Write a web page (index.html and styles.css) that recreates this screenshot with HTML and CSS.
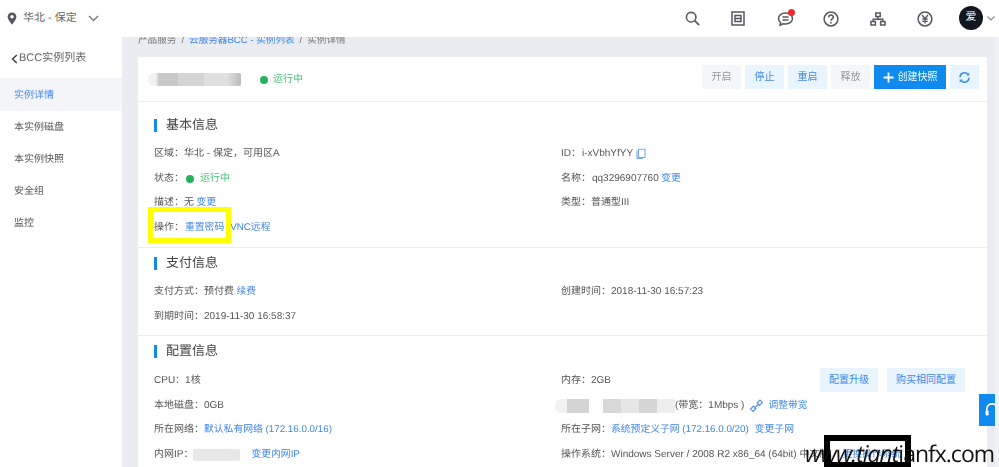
FILE: index.html
```html
<!DOCTYPE html>
<html lang="zh">
<head>
<meta charset="utf-8">
<title>实例详情</title>
<link rel="stylesheet" href="styles.css">
</head>
<body>
<div class="app">
  <header class="topbar">
    <div class="region">
      <svg class="pin" width="10" height="13" viewBox="0 0 12 16"><path d="M6 0.5C2.8 0.5 0.6 2.9 0.6 5.800 0.6 9.400 6 15.500 6 15.500S11.400 9.400 11.400 5.800C11.400 2.900 9.200 0.500 6 0.500Z" fill="#55595f"/><circle cx="6" cy="5.800" r="2.100" fill="#fff"/></svg>
      <span>华北 - 保定</span>
      <svg class="chev" width="11" height="7" viewBox="0 0 11 7"><path d="M1 1l4.500 4.500L10 1" fill="none" stroke="#777" stroke-width="1.300"/></svg>
    </div>
    <div class="tools">
      <svg class="tool t-search" width="15" height="15" viewBox="0 0 17 17"><circle cx="7" cy="7" r="5.400" fill="none" stroke="#55595f" stroke-width="1.800"/><path d="M11 11l5 5" stroke="#55595f" stroke-width="2"/></svg>
      <svg class="tool t-doc" width="14" height="15" viewBox="0 0 14 15"><path d="M1 1h12v13H1zM4 4.500h6v6H4zM4 7.500h6" fill="none" stroke="#55595f" stroke-width="1.500"/></svg>
      <div class="msg">
        <svg width="17" height="16" viewBox="0 0 17 16"><path d="M8.500 2C4.500 2 1.500 4.400 1.500 7.500c0 1.600.8 3 2.100 4l-.6 2.800 3.200-1.500c.7.200 1.500.2 2.300.2 4 0 7-2.400 7-5.500S12.500 2 8.500 2zM5.500 6h6M5.500 9h6" fill="none" stroke="#55595f" stroke-width="1.500"/></svg>
        <span class="dot"></span>
      </div>
      <svg class="tool t-help" width="16" height="16" viewBox="0 0 16 16"><circle cx="8" cy="8" r="6.900" fill="none" stroke="#55595f" stroke-width="1.500"/><path d="M5.800 6.300c0-3 4.500-3 4.500-.1 0 1.700-2.300 1.700-2.300 3.500" fill="none" stroke="#55595f" stroke-width="1.500"/><circle cx="8" cy="11.700" r=".9" fill="#55595f"/></svg>
      <svg class="tool t-org" width="16" height="14" viewBox="0 0 16 14"><path d="M5.800 1h4.400v3.600H5.800zM1 9.400h4.400V13H1zM10.600 9.400H15V13h-4.400zM8 4.600v2.600M3.200 9.400V7.200h9.600v2.200" fill="none" stroke="#55595f" stroke-width="1.500"/></svg>
      <svg class="tool t-yuan" width="16" height="16" viewBox="0 0 16 16"><circle cx="8" cy="8" r="6.900" fill="none" stroke="#55595f" stroke-width="1.500"/><path d="M5 4l3 3.500L11 4M8 7.500V12.500M5.300 8h5.400M5.300 10.300h5.400" fill="none" stroke="#55595f" stroke-width="1.300"/></svg>
      <div class="user">
        <span class="avatar">爱</span>
        <svg width="8" height="5" viewBox="0 0 8 5"><path d="M.5.500L4 4 7.500.5" fill="none" stroke="#8a8e94" stroke-width="1.100"/></svg>
      </div>
    </div>
  </header>
  <div class="body">
    <aside class="sidebar">
      <div class="back"><svg width="7" height="10" viewBox="0 0 7 10"><path d="M5.800 1L1.600 5l4.200 4" fill="none" stroke="#444" stroke-width="1.600"/></svg>BCC实例列表</div>
      <nav class="menu">
        <a class="menu-item active">实例详情</a>
        <a class="menu-item">本实例磁盘</a>
        <a class="menu-item">本实例快照</a>
        <a class="menu-item">安全组</a>
        <a class="menu-item">监控</a>
      </nav>
    </aside>
    <main class="main">
      <div class="crumbs">产品服务<span class="sep">/</span><a>云服务器BCC - 实例列表</a><span class="sep">/</span>实例详情</div>
      <section class="card">
        <div class="card-head">
          <div class="inst">
            <span class="name-mask"></span>
            <span class="state-dot"></span><span class="green">运行中</span>
          </div>
          <div class="actions">
            <button class="btn off">开启</button>
            <button class="btn soft">停止</button>
            <button class="btn soft">重启</button>
            <button class="btn off">释放</button>
            <button class="btn solid"><svg width="11" height="11" viewBox="0 0 11 11"><path d="M5.500 .5v10M.5 5.500h10" stroke="#fff" stroke-width="1.800"/></svg>创建快照</button>
            <button class="btn soft icon"><svg width="11" height="11" viewBox="0 0 11 11"><path d="M1 5.200a4.500 4.500 0 0 1 8-2.700M10 5.800a4.500 4.500 0 0 1-8 2.700" fill="none" stroke="#2f8fee" stroke-width="1.500"/><path d="M10.300 .6v3H7.300zM.7 10.400v-3h3z" fill="#2f8fee"/></svg></button>
          </div>
        </div>

        <div class="block first">
          <h2 class="title">基本信息</h2>
          <div class="rows">
            <div>区域：华北 - 保定，可用区A</div>
            <div>ID：<span class="v">i-xVbhYfYY</span><svg class="copy" width="10" height="11" viewBox="0 0 10 11"><path d="M2.500 1.200H9v8.300H2.500zM1 2.500v8h6" fill="none" stroke="#7ea6ee" stroke-width="1.100"/></svg></div>
            <div>状态：<span class="state-dot gap"></span><span class="green">运行中</span></div>
            <div>名称：<span class="v">qq3296907760</span><a class="after">变更</a></div>
            <div>描述：无<a class="after">变更</a></div>
            <div>类型：普通型III</div>
            <div>操作：<a class="v">重置密码</a><a class="after-wide">VNC远程</a></div>
          </div>
        </div>

        <div class="block pay">
          <h2 class="title">支付信息</h2>
          <div class="rows">
            <div>支付方式：预付费<a class="after">续费</a></div>
            <div>创建时间：2018-11-30 16:57:23</div>
            <div>到期时间：2019-11-30 16:58:37</div>
          </div>
        </div>

        <div class="block config">
          <h2 class="title">配置信息</h2>
          <div class="rows">
            <div>CPU：1核</div>
            <div class="with-btns">内存：2GB<span class="cfg-btns"><button class="btn soft wide">配置升级</button><button class="btn soft wider">购买相同配置</button></span></div>
            <div>本地磁盘：0GB</div>
            <div class="band"><span class="ip-mask"></span><span>(带宽：1Mbps )</span><svg class="link" width="15" height="14" viewBox="0 0 15 14"><path d="M1.500 10l3-3 2.500 2.500-3 3zM8 4l3-3 2.500 2.500-3 3zM5 9.500l5-5" fill="none" stroke="#5b8fe8" stroke-width="1.100"/></svg><a>调整带宽</a></div>
            <div>所在网络：<a>默认私有网络 (172.16.0.0/16)</a></div>
            <div>所在子网：<a>系统预定义子网 (172.16.0.0/20)</a><a class="after-wide">变更子网</a></div>
            <div class="lan">内网IP：<span class="lan-mask"></span><a>变更内网IP</a></div>
            <div>操作系统：Windows Server / 2008 R2 x86_64 (64bit) 中文版<a class="after-os">更换操作系统</a></div>
          </div>
        </div>
      </section>
    </main>
    <div class="scroll"></div>
  </div>
  <div class="float-help"><svg width="14" height="16" viewBox="0 0 14 16"><path d="M1.800 11V7a5.200 5.200 0 0 1 10.400 0v4" fill="none" stroke="#fff" stroke-width="1.700"/><rect x=".6" y="8.500" width="3" height="5" rx="1.200" fill="#fff"/></svg></div>
</div>
<div class="mark-yellow"></div>
<div class="mark-black"></div>
<div class="watermark"><i>www.tiant</i>ianfx.com</div>
</body>
</html>
```

FILE: styles.css
```css
* { box-sizing: border-box; }
html, body { margin: 0; padding: 0; height: 467px; overflow: hidden; }
body { background: #e9ecf1; font: 10px/1.2 "Liberation Sans", "Noto Sans CJK SC", sans-serif; color: #555; position: relative; text-rendering: geometricPrecision; }
a { color: #3f86ea; font-size: 9.800px; }
.app { filter: blur(.4px); height: 467px; display: flex; flex-direction: column; }

.topbar { height: 37px; flex: none; background: #fff; display: flex; align-items: center; justify-content: space-between; }
.region { display: flex; align-items: center; padding-left: 7px; font-size: 11px; color: #666; }
.pin { margin-right: 6px; }
.chev { margin-left: 11px; }
.tools { display: flex; align-items: center; padding-right: 4px; }
.tool { display: block; }
.t-search { margin-right: 31px; }
.t-doc { margin-right: 32px; }
.msg { position: relative; margin-right: 29px; height: 16px; }
.msg svg { display: block; }
.dot { position: absolute; right: -1px; top: -2px; width: 7px; height: 7px; border-radius: 50%; background: #ee2a2a; }
.t-help { margin-right: 31px; }
.t-org { margin-right: 31px; }
.t-yuan { margin-right: 26px; }
.user { display: flex; align-items: center; gap: 4px; }
.avatar { width: 24px; height: 24px; border-radius: 50%; background: #12161f; color: #fff; font-size: 11px; display: flex; align-items: center; justify-content: center; margin-top: -2px; }

.body { flex: 1; display: flex; min-height: 0; }
.sidebar { width: 122px; flex: none; background: #fff; }
.back { height: 41px; display: flex; align-items: center; gap: 1px; padding: 2px 0 0 11px; font-size: 11px; color: #666; }
.menu { display: flex; flex-direction: column; }
.menu-item { height: 32px; display: flex; align-items: center; padding: 2px 0 0 14px; color: #555; font-size: 10px; }
.menu-item.active { background: #f3f5f9; color: #4a8af0; height: 33px; }

.main { flex: 1; padding: 0 8px 0 16px; min-width: 0; overflow: hidden; }
.crumbs { height: 20px; margin-top: -2px; color: #777; white-space: nowrap; font-size: 9.600px; }
.crumbs a { font-size: 9.600px; }
.sep { margin: 0 5px; }
.card { background: #fff; border-radius: 2px; margin-top: 2px; }
.card-head { height: 45px; border-bottom: 1px solid #e9ecf1; display: flex; justify-content: space-between; align-items: center; padding: 0 8px 0 10px; }
.inst { display: flex; align-items: center; margin-top: 1px; }
.name-mask { width: 93px; height: 13px; border-radius: 6px 2px 2px 6px; background: linear-gradient(90deg, #f2f2f2 0 8%, #c8c8c8 12% 32%, #d4d4d4 32% 60%, #dfdfdf 60% 85%, #bbb 100%); margin-right: 19px; }
.state-dot { width: 8px; height: 8px; border-radius: 50%; background: #24b35c; display: inline-block; margin-right: 5px; }
.state-dot.gap { margin: 0 6px 0 2px; }
.green { color: #47c178; }
.actions { display: flex; gap: 4px; margin-bottom: 4px; }
.btn { height: 24px; width: 39px; border: 0; padding: 0; font: inherit; background: #f5f6f9; color: #999; display: inline-flex; align-items: center; justify-content: center; }
.btn.soft { background: #e8f4fe; color: #4289ea; }
.btn.solid { background: #0f8bf0; color: #fff; width: 72px; gap: 4px; }
.btn.icon { width: 29px; }
.btn.wide { width: 58px; }
.btn.wider { width: 78px; }

.block { border-top: 1px solid #e9ecf1; padding: 5px 0 6px 16px; }
.block.first { border-top: 0; padding-top: 13px; padding-bottom: 8px; }
.block.pay { padding-bottom: 7px; }
.block.config .title { margin-bottom: 6.500px; }
.title { margin: 0 0 5.500px; height: 20px; font-size: 13px; font-weight: 400; color: #444; display: flex; align-items: center; }
.title::before { content: ""; width: 3px; height: 13px; background: #0f8bf0; margin-right: 9px; }
.rows { display: grid; grid-template-columns: 407px 1fr; grid-auto-rows: 24.700px; align-items: center; white-space: nowrap; }
.rows > div { display: flex; align-items: center; white-space: pre; padding-top: 2px; }
.rows > div > * { flex: none; }
.v { margin-left: 1px; }
.after { margin-left: 2.500px; }
.after-wide { margin-left: 6px; }
.after-os { margin-left: 13px; }
.copy { margin-left: 3px; }
.with-btns { position: relative; }
.cfg-btns { position: absolute; left: 259px; top: 50%; margin-top: -12px; display: flex; gap: 9px; }
.band { margin-left: -6px; }
.ip-mask { width: 120px; height: 14px; border-radius: 6px 2px 2px 6px; background: linear-gradient(90deg, #f2f2f2 0 10%, #d4d4d4 10% 28%, #fff 28% 40%, #d8d8d8 40% 55%, #e6e6e6 55% 70%, #d6d6d6 70% 85%, #eee 85%); }
.link { margin: 0 4px 0 5px; }
.lan-mask { width: 47px; height: 12px; background: #e8e8e8; margin-right: 11px; border-radius: 2px; }

.scroll { width: 4px; flex: none; background: #f1f2f5; }
.float-help { position: absolute; right: 4px; top: 394px; width: 16px; height: 32px; background: #0f8bf0; display: flex; align-items: center; padding-left: 6px; overflow: hidden; }
.float-help svg { flex: none; }

.mark-yellow { position: absolute; left: 148px; top: 207px; width: 83px; height: 36px; border: 5px solid #ffff00; }
.mark-black { position: absolute; left: 824px; top: 435px; width: 87px; height: 32px; border: 6px solid #000; border-bottom-width: 5px; }
.watermark { position: absolute; left: 805px; top: 438px; font: 23px/30px "Open Sans", sans-serif; letter-spacing: -1px; color: #111; white-space: nowrap; }
```
